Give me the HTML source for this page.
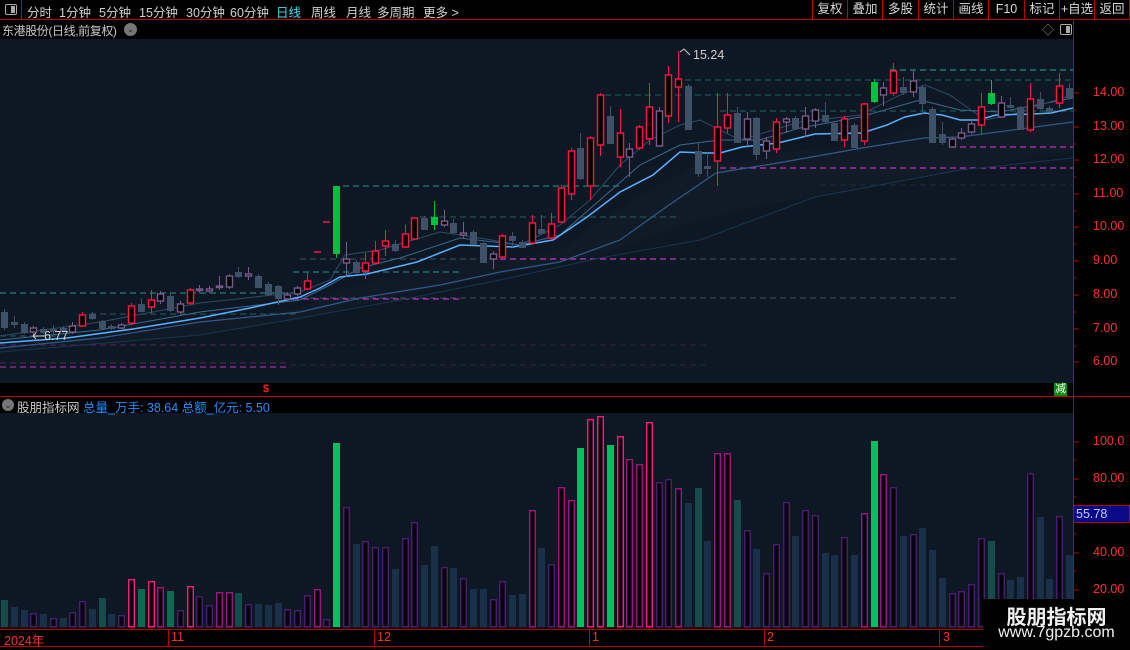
<!DOCTYPE html>
<html><head><meta charset="utf-8">
<style>
*{margin:0;padding:0;box-sizing:border-box}
body{width:1130px;height:650px;background:#000;overflow:hidden;position:relative;font-family:"Liberation Sans","Noto Sans CJK SC",sans-serif;color:#c8c8c8;font-size:12px}
.abs{position:absolute;white-space:nowrap}
#top span{position:absolute;top:2px;font-size:12.5px;color:#d0d0d0}
.btn{position:absolute;top:0;height:19px;border-left:1px solid #c00000;text-align:center;line-height:19px;font-size:12.5px;color:#d8d8d8}
.pl{position:absolute;left:1093px;color:#ff3030;font-size:12.5px}
</style></head><body>
<div id="top" class="abs" style="left:0;top:0;width:1130px;height:20px;border-bottom:1px solid #c00000">
<div class="abs" style="left:0;top:0;width:22px;height:19px;border-right:1px solid #c00000"></div>
<div class="abs" style="left:5px;top:4px;width:12px;height:11px;border:1px solid #aaa;border-radius:2px"><div style="position:absolute;right:1px;top:1px;width:4px;height:7px;background:#aaa"></div></div>
<span style="left:27px">分时</span><span style="left:59px">1分钟</span><span style="left:99px">5分钟</span><span style="left:139px">15分钟</span><span style="left:186px">30分钟</span><span style="left:230px">60分钟</span><span style="left:276px;color:#40e0f0">日线</span><span style="left:311px">周线</span><span style="left:346px">月线</span><span style="left:377px">多周期</span><span style="left:423px">更多 &gt;</span>
<div class="btn" style="left:812px;width:35px">复权</div><div class="btn" style="left:847px;width:35px">叠加</div><div class="btn" style="left:882px;width:36px">多股</div><div class="btn" style="left:918px;width:35px">统计</div><div class="btn" style="left:953px;width:35px">画线</div><div class="btn" style="left:988px;width:36px">F10</div><div class="btn" style="left:1024px;width:35px">标记</div><div class="btn" style="left:1059px;width:35px">+自选</div><div class="btn" style="left:1094px;width:36px;border-right:1px solid #c00000">返回</div>
</div>
<div class="abs" style="left:2px;top:22px;font-size:12px;letter-spacing:-0.4px;color:#c8c8c8">东港股份(日线,前复权)</div>
<div class="abs" style="left:124px;top:23px;width:13px;height:13px;border-radius:50%;background:#777;color:#222;font-size:9px;text-align:center;line-height:13px">⌄</div>
<div class="abs" style="left:1042px;top:21px;color:#999;font-size:12px">◇</div>
<div class="abs" style="left:1060px;top:24px;width:12px;height:11px;border:1px solid #aaa;border-radius:2px"><div style="position:absolute;right:1px;top:1px;width:4px;height:7px;background:#aaa"></div></div>

<svg id="cv" class="abs" style="left:0;top:0" width="1130" height="650" xmlns="http://www.w3.org/2000/svg"></svg>

<div class="pl" style="top:85px">14.00</div><div class="pl" style="top:119px">13.00</div><div class="pl" style="top:152px">12.00</div><div class="pl" style="top:186px">11.00</div><div class="pl" style="top:219px">10.00</div><div class="pl" style="top:253px">9.00</div><div class="pl" style="top:287px">8.00</div><div class="pl" style="top:321px">7.00</div><div class="pl" style="top:354px">6.00</div>
<div class="pl" style="top:434px">100.0</div><div class="pl" style="top:471px">80.00</div><div class="pl" style="top:545px">40.00</div><div class="pl" style="top:582px">20.00</div>
<div class="abs" style="left:1073px;top:505px;width:57px;height:18px;background:#0a0a88;border:1px solid #c00000;color:#c8c8ff;font-size:12.5px;line-height:16px;padding-left:2px">55.78</div>

<div class="abs" style="left:693px;top:48px;color:#d0d0d0;font-size:12.5px">15.24</div>
<div class="abs" style="left:44px;top:329px;color:#d0d0d0;font-size:12.5px">6.77</div>

<div class="abs" style="left:263px;top:383px;color:#ff2020;font-size:11px;font-weight:bold">$</div>
<div class="abs" style="left:1054px;top:383px;width:13px;height:13px;background:#0a8a0a;color:#fff;font-size:11px;line-height:13px;text-align:center">减</div>

<div class="abs" style="left:2px;top:399px;width:12px;height:12px;border-radius:50%;background:#777;color:#222;font-size:9px;text-align:center;line-height:12px">⌄</div>
<div class="abs" style="left:17px;top:397px;font-size:12.5px;color:#c8c8c8">股朋指标网</div>
<div class="abs" style="left:83px;top:397px;font-size:12.5px;color:#2090ff">总量_万手: 38.64 总额_亿元: 5.50</div>

<div class="abs" style="left:4px;top:630px;color:#ff3030;font-size:12.5px">2024年</div>
<div class="abs" style="left:171px;top:630px;color:#ff3030;font-size:12.5px">11</div>
<div class="abs" style="left:377px;top:630px;color:#ff3030;font-size:12.5px">12</div>
<div class="abs" style="left:592px;top:630px;color:#ff3030;font-size:12.5px">1</div>
<div class="abs" style="left:767px;top:630px;color:#ff3030;font-size:12.5px">2</div>
<div class="abs" style="left:943px;top:630px;color:#ff3030;font-size:12.5px">3</div>

<div class="abs" style="left:983px;top:599px;width:147px;height:51px;background:#000"></div>
<div class="abs" style="left:983px;top:601px;width:147px;text-align:center;color:#f0f0f0;font-size:20px;font-weight:bold">股朋指标网</div>
<div class="abs" style="left:983px;top:624px;width:147px;text-align:center;color:#f0f0f0;font-size:16px">www.7gpzb.com</div>

<script>
var NS="http://www.w3.org/2000/svg",cv=document.getElementById("cv");
function el(t,a){var e=document.createElementNS(NS,t);for(var k in a)e.setAttribute(k,a[k]);cv.appendChild(e);return e}
el("rect",{x:0,y:39,width:1073,height:344,fill:"#0e1824"});
el("rect",{x:0,y:413,width:1073,height:215,fill:"#0e1824"});
el("line",{x1:1073.5,y1:20,x2:1073.5,y2:629,stroke:"#c00000"});
el("line",{x1:0,y1:396.5,x2:1130,y2:396.5,stroke:"#c00000"});
el("line",{x1:0,y1:629.5,x2:1130,y2:629.5,stroke:"#c00000"});
el("line",{x1:0,y1:646.5,x2:1130,y2:646.5,stroke:"#c00000"});
[168,374,589,764,939].forEach(function(x){el("line",{x1:x+.5,y1:629,x2:x+.5,y2:646,stroke:"#c00000"})});
[93,127,160,194,227,261,295,329,362,442,479,516,553,590].forEach(function(y){el("line",{x1:1073,y1:y,x2:1079,y2:y,stroke:"#c00000"})});
[110,144,177,211,244,278,312,346,460,497,534,571,609].forEach(function(y){el("line",{x1:1073,y1:y,x2:1076,y2:y,stroke:"#c00000"})});
el("polygon",{points:"0,348 100,336 200,322 300,308 340,290 400,275 460,258 520,258 560,250 600,222 640,196 690,168 740,162 800,150 860,145 920,126 960,130 1000,128 1073,118 1073,150 960,170 860,190 760,205 680,225 600,255 500,275 400,295 300,320 200,335 100,345 0,352",fill:"#111b28"});
function dl(x1,x2,y,c){el("line",{x1:x1,y1:y,x2:x2,y2:y,stroke:c,"stroke-width":1.3,"stroke-dasharray":"6 4"})}
var tl="#1f7f7c",td="#1a5652",gr="#3a4656",pk="#c030c0",pd="#4a2050";
dl(890,1073,70,"#23908c");dl(685,1073,80,td);dl(605,862,95,td);dl(720,1073,111,td);
dl(343,620,186,tl);dl(420,680,217,td);dl(820,1073,185,"#1a2a38");
dl(300,960,259,gr);dl(500,680,259,pk);dl(300,960,298,gr);dl(293,460,299,pk);
dl(293,460,272,tl);dl(0,293,293,tl);dl(90,300,314,td);dl(0,60,336,td);
dl(0,290,345,pd);dl(0,290,363,pd);dl(0,290,367,"#a030a0");dl(290,710,365,"#2a2030");dl(290,710,345,"#2a2030");
dl(960,1073,147,pk);dl(720,1073,168,pk);
function pl(p,c,w){el("polyline",{points:p,fill:"none",stroke:c,"stroke-width":w||1})}
pl("0,352 200,335 300,318 400,300 500,280 600,258 700,240 815,197 960,170 1073,158","#1a3450",1);
pl("0,348 100,338 200,322 300,312 360,298 440,285 500,272 560,262 620,240 669,205 716,173 778,163 862,148 924,138 960,137 1073,122","#2f5a88",1.2);
pl("0,340 100,330 200,312 300,300 330,285 360,268 400,258 460,238 520,245 560,235 600,200 640,165 680,145 720,140 760,140 800,128 860,117 920,100 960,110 1000,112 1073,98","#3a6a8e",1);
pl("0,336 100,322 200,303 300,292 330,280 345,255 380,250 440,232 480,238 520,245 560,225 590,200 620,165 650,140 680,125 700,120 740,140 800,122 860,115 900,95 925,85 950,95 985,120 1010,115 1040,105 1073,95","#2d4b66",1);
pl("0,343 67,338 133,329 200,318 250,308 300,297 320,288 340,277 367,274 417,262 460,245 513,247 553,240 587,217 620,192 653,175 680,152 705,153 720,153 742,147 778,143 815,134 862,133 887,125 905,117 924,113 942,115 960,120 978,120 996,115 1033,114 1051,113 1073,108","#58b0ff",1.5);
var C=[["g",312,327,309,330],["g",322,324,316,328],["g",324,332,322,334],["p",328,332,326,335],["g",329,332,327,334],["g",329,331,325,334],["g",328,331,326,333],["p",326,332,322,334],["r",315,326,312,327],["g",314,318,312,320],["g",321,328,320,329],["g",326,328,324,330],["p",325,328,323,329],["r",306,323,303,325],["g",304,311,298,312],["r",300,307,290,313],["p",294,301,291,304],["g",296,310,293,312],["p",304,312,301,314],["r",290,303,288,305],["p",289,290,285,293],["p",289,291,286,293],["p",286,287,276,290],["p",276,287,274,289],["g",272,276,267,278],["p",274,276,267,280],["g",276,287,274,288],["g",284,294,282,295],["g",286,298,285,305],["p",295,299,292,302],["p",288,294,286,296],["r",281,289,273,290],["d",252],["d",222],["G",186,253,186,258],["p",259,263,242,277],["g",262,272,260,274],["r",263,271,253,279],["r",251,263,241,264],["r",241,246,230,256],["g",244,250,240,252],["r",234,247,225,248],["r",218,239,217,240],["g",218,229,216,230],["G",217,224,201,230],["p",221,225,210,227],["g",223,232,219,234],["p",233,235,222,238],["g",232,244,230,245],["g",243,262,242,263],["p",254,259,251,269],["r",236,257,234,258],["g",236,240,232,247],["g",242,247,240,248],["r",223,243,215,244],["g",229,233,215,235],["r",224,238,213,239],["r",188,222,185,223],["r",151,194,148,200],["g",148,178,133,180],["r",138,186,136,200],["r",95,145,93,156],["g",116,143,106,144],["r",133,157,109,167],["p",149,157,143,177],["r",127,148,125,150],["r",107,139,83,145],["p",111,146,107,147],["r",75,116,66,123],["r",79,87,51,122],["g",86,129,84,130],["g",151,173,142,177],["g",166,168,153,177],["r",127,161,93,186],["r",115,128,93,133],["g",113,142,107,143],["p",119,139,112,145],["g",118,154,117,160],["p",141,151,137,159],["r",122,149,118,153],["p",119,122,117,133],["g",118,128,116,130],["p",116,129,107,137],["p",110,121,108,128],["g",115,121,102,123],["g",123,140,121,141],["r",119,140,116,147],["g",125,147,123,148],["r",104,141,103,145],["G",82,101,79,103],["p",88,95,82,106],["r",71,93,63,96],["g",87,92,77,95],["p",81,92,71,97],["g",87,103,85,115],["g",109,142,107,143],["g",134,142,122,145],["p",139,147,137,148],["p",133,138,128,140],["p",124,132,120,134],["r",107,125,93,134],["G",93,103,80,105],["p",103,117,96,118],["g",105,107,97,108],["g",107,129,106,130],["r",99,130,83,132],["g",99,108,92,110],["g",108,111,106,112],["r",86,103,73,108],["g",88,97,83,99]];
var col={r:"#ff1744",g:"#3f5166",p:"#7a5a8c",G:"#00c040"};
C.forEach(function(c,i){var x=Math.round(4+i*9.77);
 if(c[0]=="d"){el("line",{x1:x-3,y1:c[1],x2:x+4,y2:c[1],stroke:"#ff1744","stroke-width":1.5});return}
 var k=c[0],s=col[k];
 el("line",{x1:x+.5,y1:c[3],x2:x+.5,y2:c[4],stroke:s,"stroke-width":1});
 var h=Math.max(c[2]-c[1],1.5);
 if(k=="r"||k=="p")el("rect",{x:x-2.5,y:c[1],width:6,height:h,fill:"#000",stroke:s,"stroke-width":1.4});
 else el("rect",{x:x-3,y:c[1],width:7,height:h+1,fill:s});
});
pl("680,52 684,49 690,55","#ccc",1);pl("33,336 44,336","#ccc",1);pl("36,333 33,336 36,339","#ccc",1);
var V=[[600,"t"],[607,"b"],[610,"b"],[613,"u"],[614,"b"],[618,"u"],[618,"b"],[612,"u"],[601,"u"],[609,"b"],[598,"t"],[614,"b"],[615,"u"],[579,"k"],[589,"T"],[581,"k"],[587,"m"],[591,"T"],[610,"u"],[586,"k"],[596,"u"],[605,"u"],[592,"m"],[592,"m"],[593,"t"],[604,"u"],[604,"b"],[605,"b"],[603,"b"],[609,"u"],[610,"u"],[595,"u"],[589,"m"],[619,"u"],[443,"G"],[507,"u"],[544,"b"],[541,"u"],[547,"u"],[547,"u"],[569,"b"],[538,"u"],[522,"u"],[565,"b"],[546,"b"],[567,"u"],[568,"b"],[578,"u"],[589,"b"],[589,"b"],[599,"u"],[581,"u"],[595,"b"],[594,"b"],[510,"m"],[548,"b"],[564,"u"],[487,"m"],[500,"m"],[448,"G"],[419,"k"],[416,"k"],[445,"G"],[436,"k"],[459,"m"],[464,"m"],[422,"k"],[482,"u"],[479,"u"],[488,"m"],[503,"b"],[488,"t"],[541,"b"],[453,"m"],[453,"m"],[500,"t"],[530,"u"],[549,"b"],[573,"u"],[544,"u"],[502,"u"],[536,"b"],[510,"u"],[515,"u"],[553,"b"],[555,"b"],[537,"u"],[555,"b"],[513,"m"],[441,"G"],[474,"m"],[487,"u"],[536,"b"],[534,"u"],[528,"b"],[550,"b"],[578,"b"],[593,"u"],[591,"u"],[584,"u"],[538,"u"],[541,"t"],[573,"u"],[580,"b"],[577,"b"],[473,"u"],[517,"b"],[579,"b"],[516,"u"],[555,"b"]];
var fc={b:"#1a3048",t:"#174a4a",T:"#0e6b52",G:"#00c060"},sc={u:"#4a1d70",m:"#a01480",k:"#ff1a80"};
V.forEach(function(v,i){var x=Math.round(4+i*9.77)-3;
 if(fc[v[1]])el("rect",{x:x,y:v[0],width:7,height:627-v[0],fill:fc[v[1]]});
 else el("rect",{x:x+.7,y:v[0]+.7,width:5.6,height:626-v[0],fill:"#06040a",stroke:sc[v[1]],"stroke-width":1.4});
});
</script>
</body></html>
